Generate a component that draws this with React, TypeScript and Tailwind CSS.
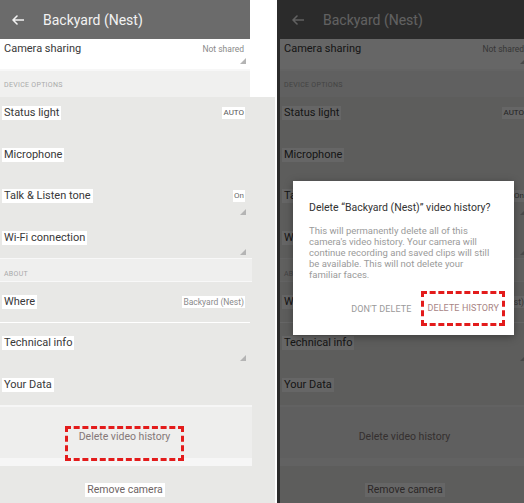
import React from 'react';

function Arrow() {
  return (
    <svg width="12" height="10" viewBox="0 0 12 10" fill="none" stroke="#f2f2f2" strokeWidth="1.6" strokeLinecap="round" strokeLinejoin="round">
      <path d="M11.5 5H1M5 1L1 5l4 4" />
    </svg>
  );
}

function Grip({ className = '' }: { className?: string }) {
  return (
    <svg width="6" height="6" viewBox="0 0 6 6" className={`absolute right-[4px] ${className}`}>
      <polygon points="6,0 6,6 0,6" fill="#b4b4b4" />
    </svg>
  );
}

function Row({
  label,
  value,
  h,
  pt,
  grip,
  valueClass = 'text-[8.5px] text-[#8a8a8a]',
  extra = '',
}: {
  label: string;
  value?: string;
  h: string;
  pt: string;
  grip?: string;
  valueClass?: string;
  extra?: string;
}) {
  return (
    <div className={`relative w-[250px] ${h} ${pt} ${extra}`}>
      <div className="flex items-center justify-between h-[14px] pl-[2px] pr-[5px]">
        <span className="bg-white px-[2px] text-[11px] leading-[14px] text-[#383838]">{label}</span>
        {value && <span className={`bg-white px-[1px] leading-[12px] ${valueClass}`}>{value}</span>}
      </div>
      {grip && <Grip className={grip} />}
    </div>
  );
}

function Screen({ mark }: { mark?: boolean }) {
  return (
    <div className="w-full">
      <div className="w-[250px]">
        <header className="h-[39px] bg-[#6b6b6b] flex items-center pl-[12px] gap-[19px]">
          <Arrow />
          <span className="text-[14px] leading-[18px] text-[#f2f2f2]">Backyard (Nest)</span>
        </header>
        <div className="relative h-[30px] bg-white pt-[3px]">
          <div className="flex items-center justify-between h-[14px] pl-[4px] pr-[6px]">
            <span className="text-[11px] leading-[14px] text-[#383838]">Camera sharing</span>
            <span className="text-[8.5px] leading-[12px] text-[#8a8a8a]">Not shared</span>
          </div>
          <Grip className="bottom-[5px]" />
        </div>
        <div className="h-[28px] bg-[#f0f0ef] border-t-[2px] border-[#f7f7f7] pl-[4px] pt-[9px] text-[7px] leading-[10px] text-[#a9a9a9] tracking-[0.3px]">
          DEVICE OPTIONS
        </div>
      </div>
      <div className="bg-[#e8e8e6]">
        <Row label="Status light" value="AUTO" h="h-[42px]" pt="pt-[9px]" valueClass="text-[8px] text-[#555]" />
        <Row label="Microphone" h="h-[41px]" pt="pt-[9px]" />
        <Row label="Talk & Listen tone" value="On" h="h-[42px]" pt="pt-[9px]" grip="bottom-[7px]" valueClass="text-[8px] text-[#6a6a6a]" />
        <Row label="Wi-Fi connection" h="h-[36px]" pt="pt-[9px]" grip="bottom-[3px]" />
        <div className="w-[252px] h-[24px] bg-[#efefee] border-y border-[#f8f8f8] pl-[4px] pt-[10px] text-[7px] leading-[10px] text-[#a9a9a9] tracking-[0.3px]">
          ABOUT
        </div>
        <Row label="Where" value="Backyard (Nest)" h="h-[41px]" pt="pt-[13px]" extra="border-b border-white" />
        <Row label="Technical info" h="h-[41px]" pt="pt-[13px]" grip="bottom-[3px]" />
        <Row label="Your Data" h="h-[41px]" pt="pt-[14px]" />
        <div className="w-[252px] h-[61px] bg-[#eeeeed] border-t-[2px] border-b-[8px] border-[#f6f6f6] flex flex-col items-center pt-[19px]">
          <div className={`border-[3px] border-dashed ${mark ? 'border-[#e31b1b]' : 'border-transparent'} px-[11px] pt-[1px] pb-[15px] -ml-[3px]`}>
            <span className="block text-[10.5px] leading-[13px] text-[#857878]">Delete video history</span>
          </div>
        </div>
        <div className="w-[250px] h-[37px] flex justify-center pt-[17px]">
          <span className="bg-white px-[2px] h-[14px] text-[10.5px] leading-[14px] text-[#6e6464]">Remove camera</span>
        </div>
      </div>
    </div>
  );
}

export default function App() {
  return (
    <div className="w-[524px] h-[503px] flex bg-white overflow-hidden font-[Roboto,'Noto_Sans',sans-serif]">
      <div className="w-[275px] h-full overflow-hidden bg-white">
        <Screen mark />
      </div>
      <div className="w-[2px] bg-white" />
      <div className="relative w-[247px] h-full overflow-hidden bg-[#e8e8e6]">
        <div className="border-l-[3px] border-[#6b6b6b]">
          <Screen />
        </div>
        <div className="absolute inset-0 bg-black/60" />
        <div className="absolute left-[16px] top-[181px] w-[221px] h-[154px] bg-white shadow-[0_2px_8px_rgba(0,0,0,0.35)] pt-[20px]">
          <p className="px-[16px] text-[10.5px] leading-[14px] text-[#333]">Delete “Backyard (Nest)” video history?</p>
          <p className="mt-[10px] px-[16px] whitespace-nowrap text-[9.5px] leading-[11px] text-[#9a9a9a]">
            This will permanently delete all of this
            <br />
            camera's video history. Your camera will
            <br />
            continue recording and saved clips will still
            <br />
            be available. This will not delete your
            <br />
            familiar faces.
          </p>
          <div className="mt-[11px] flex items-center justify-end pr-[9px] gap-[10px]">
            <span className="text-[9px] leading-[12px] text-[#9a9a9a] tracking-[0.1px]">DON'T DELETE</span>
            <div className="border-[3px] border-dashed border-[#e31b1b] px-[3px] py-[8px]">
              <span className="block text-[9px] leading-[13px] text-[#a88585] tracking-[0.1px]">DELETE HISTORY</span>
            </div>
          </div>
        </div>
      </div>
    </div>
  );
}
